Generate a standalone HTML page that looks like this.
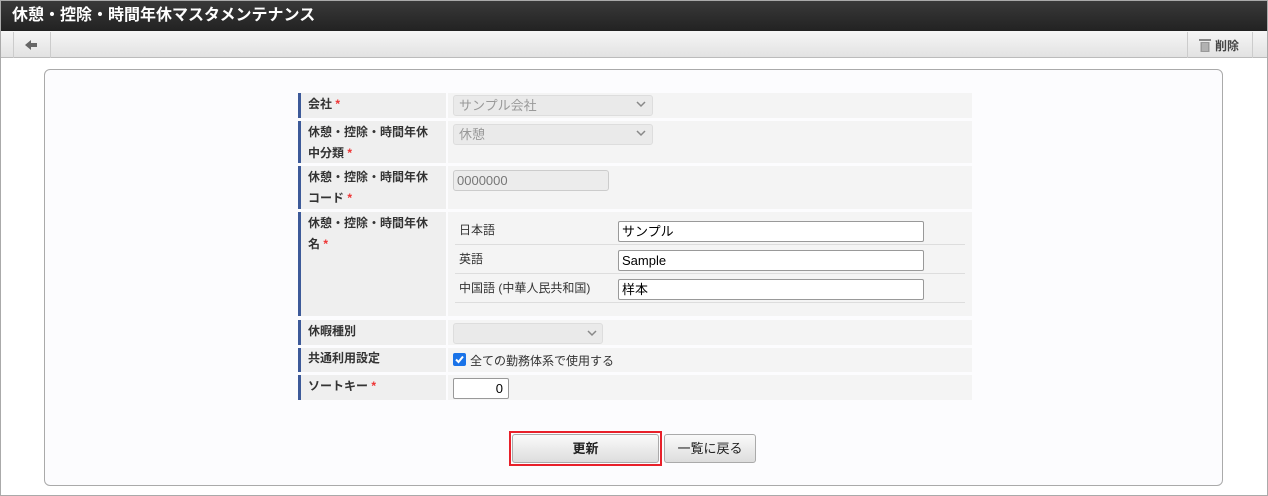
<!DOCTYPE html><html><head><meta charset="utf-8"><style>
*{box-sizing:border-box;margin:0;padding:0}
body{width:1268px;height:496px;background:#fff;font-family:"Liberation Sans","Noto Sans CJK JP",sans-serif;font-size:12px;color:#333;position:relative;overflow:hidden}
.a{position:absolute}
.frame{left:0;top:0;width:1268px;height:496px;border:1px solid #aaa;pointer-events:none}
.title{left:0;top:0;width:1268px;height:31px;background:linear-gradient(#3a3a3a,#222);color:#fff;font-weight:bold;font-size:16px;padding:0 12px;line-height:31px}
.tb{left:0;top:31px;width:1268px;height:27px;background:linear-gradient(#f6f6f6,#e2e2e2);border-bottom:1px solid #bbb}
.box{left:44px;top:69px;width:1179px;height:417px;border:1px solid #aaa;border-radius:6px;background:#fcfcfe}
.lab{left:298px;width:148px;background:#efefef;border-left:3px solid #3d5a99;font-weight:bold;padding:5px 7px;line-height:21px}
.val{left:448px;width:524px;background:#f4f4f4}
.req{color:#e33}
.sel{background:#eaeaea;border:1px solid #ddd;border-radius:3px;color:#999;padding:0 5px;height:21px;font-size:13px;line-height:19px}
.inp{background:#fff;border:1px solid #999;border-radius:2px;height:21px;padding:0 3px;font-size:13px;color:#000;line-height:19px}
.line{height:1px;background:#ddd}
.btn{border:1px solid #aaa;border-radius:3px;background:linear-gradient(#fafafa,#ddd);font-size:13px;text-align:center;color:#222}
</style></head><body>
<div class="a title">休憩・控除・時間年休マスタメンテナンス</div>
<div class="a tb"></div>
<div class="a" style="left:13px;top:32px;width:38px;height:26px;border-left:1px solid #ccc;border-right:1px solid #ccc"></div>
<svg class="a" style="left:24px;top:39px" width="14" height="12"><path d="M1 6L7 1V4H13V8H7V11Z" fill="#666"/></svg>
<div class="a" style="left:1187px;top:32px;width:66px;height:26px;border-left:1px solid #ccc;border-right:1px solid #ccc"></div>
<svg class="a" style="left:1199px;top:38px" width="12" height="14"><rect x="0" y="1" width="12" height="2" fill="#888"/><rect x="1.5" y="4" width="9" height="10" fill="#999"/><path d="M4 5V13M6 5V13M8 5V13" stroke="#ccc"/></svg>
<div class="a" style="left:1215px;top:37px;font-weight:bold;color:#444">削除</div>
<div class="a box"></div>

<div class="a lab" style="top:93px;height:25px;padding-top:1px">会社 <span class="req">*</span></div>
<div class="a val" style="top:93px;height:25px"></div>
<div class="a sel" style="left:453px;top:95px;width:200px">サンプル会社</div>
<svg class="a" style="left:636px;top:101px" width="10" height="7"><path d="M1 1L5 5L9 1" stroke="#888" stroke-width="1.5" fill="none"/></svg>

<div class="a lab" style="top:121px;height:42px;padding-top:1px">休憩・控除・時間年休<br>中分類 <span class="req">*</span></div>
<div class="a val" style="top:121px;height:42px"></div>
<div class="a sel" style="left:453px;top:124px;width:200px">休憩</div>
<svg class="a" style="left:636px;top:130px" width="10" height="7"><path d="M1 1L5 5L9 1" stroke="#888" stroke-width="1.5" fill="none"/></svg>

<div class="a lab" style="top:166px;height:43px;padding-top:1px">休憩・控除・時間年休<br>コード <span class="req">*</span></div>
<div class="a val" style="top:166px;height:43px"></div>
<div class="a inp" style="left:453px;top:170px;width:156px;background:#ececec;border-color:#ccc;color:#777;border-radius:3px">0000000</div>

<div class="a lab" style="top:212px;height:104px;padding-top:1px">休憩・控除・時間年休<br>名 <span class="req">*</span></div>
<div class="a val" style="top:212px;height:104px"></div>
<div class="a" style="left:459px;top:221px">日本語</div>
<div class="a" style="left:459px;top:250px">英語</div>
<div class="a" style="left:459px;top:279px">中国語 (中華人民共和国)</div>
<div class="a line" style="left:455px;top:244px;width:510px"></div>
<div class="a line" style="left:455px;top:273px;width:510px"></div>
<div class="a line" style="left:455px;top:302px;width:510px"></div>
<div class="a inp" style="left:618px;top:221px;width:306px">サンプル</div>
<div class="a inp" style="left:618px;top:250px;width:306px">Sample</div>
<div class="a inp" style="left:618px;top:279px;width:306px">样本</div>

<div class="a lab" style="top:320px;height:25px;padding-top:1px">休暇種別</div>
<div class="a val" style="top:320px;height:25px"></div>
<div class="a sel" style="left:453px;top:323px;width:150px"></div>
<svg class="a" style="left:587px;top:330px" width="10" height="7"><path d="M1 1L5 5L9 1" stroke="#888" stroke-width="1.5" fill="none"/></svg>

<div class="a lab" style="top:348px;height:24px;padding-top:0px">共通利用設定</div>
<div class="a val" style="top:348px;height:24px"></div>
<div class="a" style="left:453px;top:353px;width:13px;height:13px;background:#1a73e8;border-radius:2px"><svg width="13" height="13"><path d="M3 6.5L5.5 9L10 3.5" stroke="#fff" stroke-width="2" fill="none"/></svg></div>
<div class="a" style="left:470px;top:352px;font-size:12px">全ての勤務体系で使用する</div>

<div class="a lab" style="top:375px;height:25px;padding-top:1px">ソートキー <span class="req">*</span></div>
<div class="a val" style="top:375px;height:25px"></div>
<div class="a inp" style="left:453px;top:378px;width:56px;text-align:right;padding-right:5px">0</div>

<div class="a" style="left:509px;top:431px;width:153px;height:35px;border:2px solid #e8202a"></div>
<div class="a btn" style="left:512px;top:434px;width:147px;height:29px;line-height:28px;font-weight:bold">更新</div>
<div class="a btn" style="left:664px;top:434px;width:92px;height:29px;line-height:28px">一覧に戻る</div>
<div class="a frame"></div>
</body></html>
